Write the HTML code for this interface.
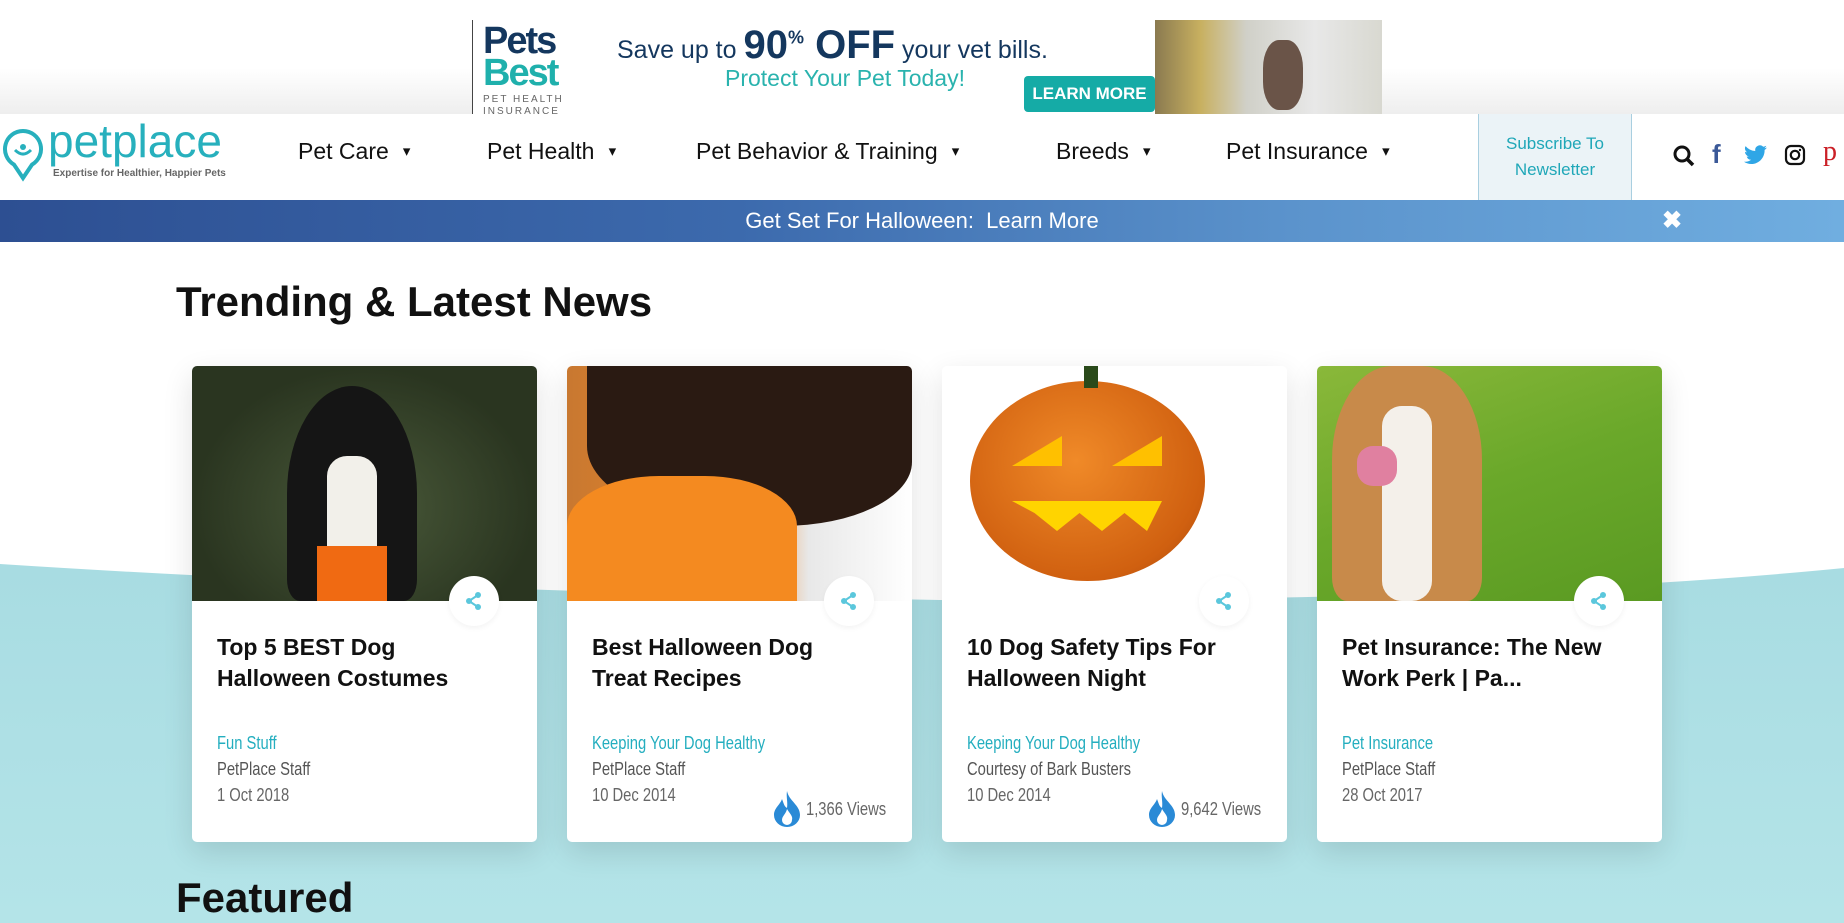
<!DOCTYPE html>
<html><head><meta charset="utf-8"><style>
*{margin:0;padding:0;box-sizing:border-box}
body{width:1844px;height:923px;overflow:hidden;background:#fff;font-family:"Liberation Sans",sans-serif;position:relative}
.abs{position:absolute}
.top{left:0;top:0;width:1844px;height:114px;background:linear-gradient(#fff 60%,#eee)}
.ad{left:472px;top:20px;width:910px;height:94px;background:#fff;border-left:1px solid #444;overflow:hidden}
nav{left:0;top:114px;width:1844px;height:86px;background:#fff}
.ni{top:24px;font-size:23px;color:#111;white-space:nowrap}
.ni:after{content:" \25BE";font-size:15px;margin-left:10px;vertical-align:3px}
.sub{left:1478px;top:0;width:154px;height:86px;background:#ebf3f7;border-left:1px solid #a9cfe0;border-right:1px solid #a9cfe0;color:#1fa7b8;font-size:17px;text-align:center;line-height:26px;padding-top:17px}
.bar{left:0;top:200px;width:1844px;height:42px;background:linear-gradient(90deg,#2d4f92 0%,#3c6aad 40%,#5b93cc 70%,#70aee0 100%);color:#fff;font-size:22px;text-align:center;line-height:42px}
.h{font-weight:bold;font-size:42px;color:#111}
.card{width:345px;height:476px;background:#fff;border-radius:5px;box-shadow:0 10px 30px rgba(0,0,0,.12);overflow:hidden}
.img{position:absolute;left:0;top:0;width:345px;height:235px;overflow:hidden}
.t{position:absolute;left:25px;top:266px;width:255px;font-size:23px;font-weight:bold;line-height:31px;color:#111}
.c{position:absolute;left:25px;top:367px;font-size:18px;color:#24aebf;transform:scaleX(.82);transform-origin:left;white-space:nowrap}
.a{position:absolute;left:25px;top:393px;font-size:18px;color:#555;transform:scaleX(.82);transform-origin:left;white-space:nowrap}
.d{position:absolute;left:25px;top:419px;font-size:18px;color:#666;transform:scaleX(.82);transform-origin:left;white-space:nowrap}
.sh{position:absolute;left:257px;top:210px;width:50px;height:50px;border-radius:50%;background:#fff;box-shadow:0 2px 6px rgba(0,0,0,.05)}
.v{position:absolute;left:205px;top:425px;font-size:18px;color:#666;display:flex;align-items:center;gap:4px;white-space:nowrap}
.v span{transform:scaleX(.82);transform-origin:left;display:inline-block;white-space:nowrap}
</style></head><body>
<div class="abs top"></div>
<div class="abs ad">
 <div class="abs" style="left:10px;top:4px;font-size:38px;line-height:34px;color:#14375e;letter-spacing:-2px;font-weight:bold">Pets</div>
 <div class="abs" style="left:10px;top:36px;font-size:38px;line-height:34px;color:#1fb0ac;letter-spacing:-2px;font-weight:bold">Best</div>
 <div class="abs" style="left:10px;top:74px;font-size:10px;color:#666;letter-spacing:2px;line-height:12px">PET HEALTH<br>INSURANCE</div>
 <div class="abs" style="left:144px;top:3px;font-size:25px;color:#14375e;white-space:nowrap">Save up to <b style="font-size:40px">90<sup style="font-size:18px">%</sup> OFF</b> your vet bills.</div>
 <div class="abs" style="left:252px;top:45px;font-size:23px;color:#2ab3ae;white-space:nowrap">Protect Your Pet Today!</div>
 <div class="abs" style="left:551px;top:56px;width:131px;height:36px;background:#15aba6;border-radius:4px;color:#fff;font-weight:bold;font-size:17px;text-align:center;line-height:36px;white-space:nowrap">LEARN MORE</div>
 <div class="abs" style="left:682px;top:0;width:228px;height:94px;background:linear-gradient(90deg,#8a7a50,#c8b060 20%,#d0d0c8 40%,#e8e8e8 70%,#d8d8d0)"></div>
 <div class="abs" style="left:790px;top:20px;width:40px;height:70px;border-radius:40%;background:#6a5448"></div>
</div>
<nav class="abs">
 <svg class="abs" style="left:2px;top:14px" width="42" height="54" viewBox="0 0 42 54"><path d="M21 3a18 18 0 0 1 9 33.6L21 50l-9-13.4A18 18 0 0 1 21 3z" fill="none" stroke="#27b0bd" stroke-width="4"/><path d="M13 22q8 8 16 0" fill="none" stroke="#27b0bd" stroke-width="3"/><circle cx="21" cy="19" r="3" fill="#27b0bd"/></svg>
 <div class="abs" style="left:48px;top:0;font-size:46px;color:#27b0bd">petplace</div>
 <div class="abs" style="left:53px;top:54px;font-size:10px;color:#666;white-space:nowrap;font-weight:bold">Expertise for Healthier, Happier Pets</div>
 <div class="abs ni" style="left:298px">Pet Care</div>
 <div class="abs ni" style="left:487px">Pet Health</div>
 <div class="abs ni" style="left:696px">Pet Behavior &amp; Training</div>
 <div class="abs ni" style="left:1056px">Breeds</div>
 <div class="abs ni" style="left:1226px">Pet Insurance</div>
 <div class="abs sub">Subscribe To<br>Newsletter</div>
 <svg class="abs" style="left:1672px;top:30px" width="24" height="24" viewBox="0 0 24 24"><circle cx="10" cy="10" r="7" fill="none" stroke="#111" stroke-width="3"/><path d="M15 15l6 6" stroke="#111" stroke-width="3.5"/></svg>
 <div class="abs" style="left:1712px;top:25px;font-size:26px;font-weight:bold;color:#3b5998">f</div>
 <svg class="abs" style="left:1744px;top:31px" width="24" height="20" viewBox="0 0 24 20"><path d="M23 2.5a9 9 0 0 1-2.7.8 4.7 4.7 0 0 0 2-2.6 9.4 9.4 0 0 1-3 1.1A4.7 4.7 0 0 0 11.3 6 13.3 13.3 0 0 1 1.6 1.1a4.7 4.7 0 0 0 1.5 6.3A4.6 4.6 0 0 1 1 6.8a4.7 4.7 0 0 0 3.8 4.6 4.7 4.7 0 0 1-2.1.1 4.7 4.7 0 0 0 4.4 3.3A9.4 9.4 0 0 1 0 16.7 13.3 13.3 0 0 0 7.2 19c8.6 0 13.4-7.2 13.4-13.4v-.6A9.6 9.6 0 0 0 23 2.5z" fill="#2fa6e6"/></svg>
 <svg class="abs" style="left:1784px;top:30px" width="22" height="22" viewBox="0 0 22 22"><rect x="2" y="2" width="18" height="18" rx="5" fill="none" stroke="#111" stroke-width="2.2"/><circle cx="11" cy="11" r="4.2" fill="none" stroke="#111" stroke-width="2.2"/><circle cx="16" cy="6" r="1.2" fill="#111"/></svg>
 <div class="abs" style="left:1823px;top:22px;font-size:28px;color:#cb2027;font-family:'Liberation Serif',serif">p</div>
</nav>
<div class="abs bar">Get Set For Halloween:&nbsp; Learn More<span class="abs" style="left:1662px;top:0;font-size:24px;font-weight:bold">✖</span></div>
<svg class="abs" style="left:0;top:540px" width="1844" height="383" viewBox="0 0 1844 383"><defs><linearGradient id="g" x1="0" y1="0" x2="0" y2="1"><stop offset="0" stop-color="#a8dce2"/><stop offset="1" stop-color="#b4e4e8"/></linearGradient></defs><path d="M0 24Q400 50 940 60Q1500 62 1844 28V383H0z" fill="url(#g)"/></svg>
<div class="abs h" style="left:176px;top:278px">Trending &amp; Latest News</div>
<div class="abs h" style="left:176px;top:874px">Featured</div>

<div class="abs card" style="left:192px;top:366px">
 <div class="img" style="background:radial-gradient(ellipse at 50% 60%,#4a5a3a,#2a3520 70%)"><div class="abs" style="left:95px;top:20px;width:130px;height:215px;border-radius:50% 50% 10% 10%;background:#151515"></div><div class="abs" style="left:135px;top:90px;width:50px;height:145px;background:#f2f0ea;border-radius:20px"></div><div class="abs" style="left:125px;top:180px;width:70px;height:55px;background:#f06a12"></div></div>
 <div class="sh"></div><svg class="abs" style="left:272px;top:225px" width="20" height="20" viewBox="0 0 20 20"><g fill="#5bc7dc"><circle cx="14" cy="4" r="3"/><circle cx="5" cy="10" r="3"/><circle cx="14" cy="16" r="3"/></g><path d="M14 4L5 10l9 6" stroke="#5bc7dc" stroke-width="2" fill="none"/></svg>
 <div class="t">Top 5 BEST Dog Halloween Costumes</div>
 <div class="c">Fun Stuff</div><div class="a">PetPlace Staff</div><div class="d">1 Oct 2018</div>
</div>

<div class="abs card" style="left:567px;top:366px">
 <div class="img" style="background:linear-gradient(90deg,#c87830,#f08a2a 50%,#e8e8e8 70%,#fff)"><div class="abs" style="left:20px;top:0;width:325px;height:160px;background:#2a1a12;border-radius:0 0 40% 50%"></div><div class="abs" style="left:0;top:110px;width:230px;height:125px;background:#f48a20;border-radius:40% 40% 0 0"></div></div>
 <div class="sh"></div><svg class="abs" style="left:272px;top:225px" width="20" height="20" viewBox="0 0 20 20"><g fill="#5bc7dc"><circle cx="14" cy="4" r="3"/><circle cx="5" cy="10" r="3"/><circle cx="14" cy="16" r="3"/></g><path d="M14 4L5 10l9 6" stroke="#5bc7dc" stroke-width="2" fill="none"/></svg>
 <div class="t">Best Halloween Dog Treat Recipes</div>
 <div class="c">Keeping Your Dog Healthy</div><div class="a">PetPlace Staff</div><div class="d">10 Dec 2014</div>
 <div class="v"><svg width="30" height="36" viewBox="0 0 30 36"><path d="M15 0C17 10 28 14 28 24a13 12 0 0 1-26 0C2 17 8 14 10 8c2 5 2 7 5 9 1-6-1-11 0-17z" fill="#2a8ad6"/><path d="M15 18c3 5 6 7 5 11a5 5 0 0 1-10 0c0-4 4-6 5-11z" fill="#fff"/></svg><span>1,366 Views</span></div>
</div>

<div class="abs card" style="left:942px;top:366px">
 <div class="img" style="background:#fff"><div class="abs" style="left:28px;top:15px;width:235px;height:200px;border-radius:50%;background:radial-gradient(ellipse at 45% 40%,#f08a28,#d06010 70%,#a04408)"></div><div class="abs" style="left:142px;top:0;width:14px;height:22px;background:#2a4a1a"></div><div class="abs" style="left:70px;top:135px;width:150px;height:30px;background:#ffd400;clip-path:polygon(0 0,100% 0,90% 100%,75% 40%,60% 100%,45% 40%,30% 100%,15% 40%)"></div><div class="abs" style="left:70px;top:70px;width:50px;height:30px;background:#ffc000;clip-path:polygon(0 100%,100% 0,100% 100%)"></div><div class="abs" style="left:170px;top:70px;width:50px;height:30px;background:#ffc000;clip-path:polygon(0 100%,100% 0,100% 100%)"></div></div>
 <div class="sh"></div><svg class="abs" style="left:272px;top:225px" width="20" height="20" viewBox="0 0 20 20"><g fill="#5bc7dc"><circle cx="14" cy="4" r="3"/><circle cx="5" cy="10" r="3"/><circle cx="14" cy="16" r="3"/></g><path d="M14 4L5 10l9 6" stroke="#5bc7dc" stroke-width="2" fill="none"/></svg>
 <div class="t">10 Dog Safety Tips For Halloween Night</div>
 <div class="c">Keeping Your Dog Healthy</div><div class="a">Courtesy of Bark Busters</div><div class="d">10 Dec 2014</div>
 <div class="v"><svg width="30" height="36" viewBox="0 0 30 36"><path d="M15 0C17 10 28 14 28 24a13 12 0 0 1-26 0C2 17 8 14 10 8c2 5 2 7 5 9 1-6-1-11 0-17z" fill="#2a8ad6"/><path d="M15 18c3 5 6 7 5 11a5 5 0 0 1-10 0c0-4 4-6 5-11z" fill="#fff"/></svg><span>9,642 Views</span></div>
</div>

<div class="abs card" style="left:1317px;top:366px">
 <div class="img" style="background:linear-gradient(160deg,#8ab83a,#6aa82a 50%,#5a9a22)"><div class="abs" style="left:15px;top:0;width:150px;height:235px;border-radius:40% 40% 10% 10%;background:#c88a4a"></div><div class="abs" style="left:65px;top:40px;width:50px;height:195px;background:#f4f0ea;border-radius:20px"></div><div class="abs" style="left:40px;top:80px;width:40px;height:40px;background:#e080a0;border-radius:40%"></div></div>
 <div class="sh"></div><svg class="abs" style="left:272px;top:225px" width="20" height="20" viewBox="0 0 20 20"><g fill="#5bc7dc"><circle cx="14" cy="4" r="3"/><circle cx="5" cy="10" r="3"/><circle cx="14" cy="16" r="3"/></g><path d="M14 4L5 10l9 6" stroke="#5bc7dc" stroke-width="2" fill="none"/></svg>
 <div class="t" style="width:290px">Pet Insurance: The New Work Perk | Pa...</div>
 <div class="c">Pet Insurance</div><div class="a">PetPlace Staff</div><div class="d">28 Oct 2017</div>
</div>
</body></html>
